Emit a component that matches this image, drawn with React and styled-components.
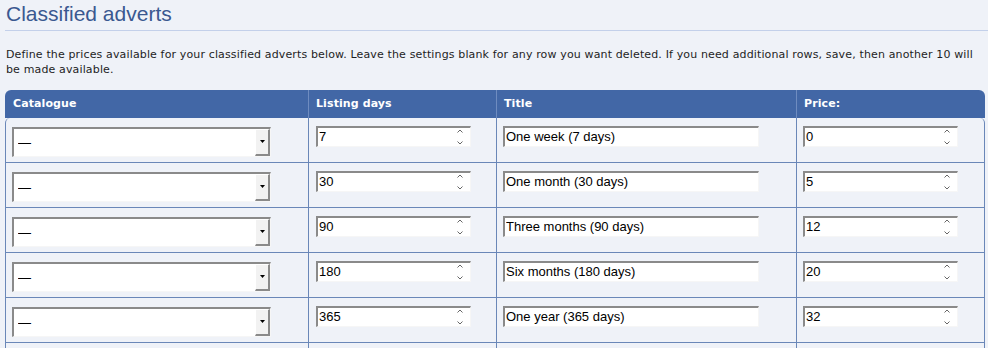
import React from 'react';
import styled, { createGlobalStyle } from 'styled-components';

const Global = createGlobalStyle`
  html, body { margin: 0; padding: 0; background: #eff2f8; overflow: hidden; }
  body { font-family: "DejaVu Sans", Verdana, sans-serif; font-size: 11px; color: #1e1e1e; }
`;

const Page = styled.div`
  padding: 0 0 0 5px;
`;

const Title = styled.h1`
  margin: 0;
  padding: 2px 0 4px 1px;
  font-family: "Liberation Sans", Arial, sans-serif;
  font-weight: normal;
  font-size: 21px;
  line-height: 24px;
  color: #3a5890;
  border-bottom: 1px solid #c3d0ea;
`;

const Intro = styled.p`
  margin: 16px 12px 0 1px;
  line-height: 15.4px;
  letter-spacing: 0.14px;
`;

const Table = styled.div`
  width: 980px;
  margin-top: 12px;
`;

const COLS = '303px 188px 300px 189px';

const HeadRow = styled.div`
  display: grid;
  grid-template-columns: ${COLS};
  height: 28px;
  background: #4267a6;
  border-radius: 6px 6px 0 0;
`;

const HeadCell = styled.div`
  display: flex;
  align-items: center;
  padding-left: ${p => (p.$first ? 8 : 7)}px;
  border-left: ${p => (p.$first ? 'none' : '1px solid #6f8cc0')};
  color: #fff;
  font-weight: bold;
  letter-spacing: 0.1px;
`;

const Body = styled.div`
  border-left: 1px solid #6a87b8;
  border-right: 1px solid #6a87b8;
  border-radius: 5px 5px 0 0;
`;

const Row = styled.div`
  display: grid;
  grid-template-columns: 302px 188px 300px 188px;
  height: 45px;
  box-sizing: border-box;
  border-bottom: 1px solid #6a87b8;
`;

const Cell = styled.div`
  box-sizing: border-box;
  padding: ${p => p.$top}px 0 0 ${p => p.$pl}px;
  border-left: ${p => (p.$first ? 'none' : '1px solid #6a87b8')};
`;

const SelectBox = styled.div`
  display: flex;
  width: 259px;
  height: 30px;
  box-sizing: border-box;
  background: #fff;
  border-top: 2px solid #8a8a8a;
  border-left: 2px solid #8a8a8a;
  border-right: 1px solid #f6f6f6;
  border-bottom: 1px solid #f6f6f6;
`;

const NativeSelect = styled.select`
  flex: 1;
  appearance: none;
  -webkit-appearance: none;
  border: none;
  outline: none;
  background: transparent;
  margin: 0;
  padding: 0 0 0 4px;
  font-family: "Liberation Sans", Arial, sans-serif;
  font-size: 13px;
  color: #000;
`;

const ArrowButton = styled.span`
  display: flex;
  align-items: center;
  justify-content: center;
  width: 15px;
  box-sizing: border-box;
  background: #f2f2f2;
  border-top: 1px solid #fff;
  border-left: 1px solid #fff;
  border-right: 2px solid #8a8a8a;
  border-bottom: 2px solid #8a8a8a;
`;

const Field = styled.div`
  display: flex;
  align-items: center;
  width: ${p => p.$w}px;
  height: 21px;
  box-sizing: border-box;
  background: #fff;
  border-top: 2px solid #8a8a8a;
  border-left: 2px solid #8a8a8a;
  border-right: 1px solid #f6f6f6;
  border-bottom: 1px solid #f6f6f6;
`;

const FieldInput = styled.input`
  flex: 1;
  min-width: 0;
  border: none;
  outline: none;
  background: transparent;
  margin: 0;
  padding: 0 0 0 1px;
  font-family: "Liberation Sans", Arial, sans-serif;
  font-size: 13px;
  color: #000;
`;

const Spinner = styled.svg`
  flex: none;
  margin-right: 6px;
`;

const SpinIcon = () => (
  <Spinner width="8" height="18" viewBox="0 0 8 18">
    <path d="M1.5 4.5 L4 2 L6.5 4.5" fill="none" stroke="#666" strokeWidth="1" />
    <path d="M1.5 13.5 L4 16 L6.5 13.5" fill="none" stroke="#666" strokeWidth="1" />
  </Spinner>
);

const Select = () => (
  <SelectBox>
    <NativeSelect defaultValue="">
      <option value="">—</option>
    </NativeSelect>
    <ArrowButton>
      <svg width="5" height="3" viewBox="0 0 5 3">
        <path d="M0 0 H5 L2.5 3 Z" fill="#000" />
      </svg>
    </ArrowButton>
  </SelectBox>
);

const NumberField = ({ value }) => (
  <Field $w={155}>
    <FieldInput defaultValue={value} />
    <SpinIcon />
  </Field>
);

const TextField = ({ value }) => (
  <Field $w={256}>
    <FieldInput defaultValue={value} />
  </Field>
);

const rows = [
  { days: '7', title: 'One week (7 days)', price: '0' },
  { days: '30', title: 'One month (30 days)', price: '5' },
  { days: '90', title: 'Three months (90 days)', price: '12' },
  { days: '180', title: 'Six months (180 days)', price: '20' },
  { days: '365', title: 'One year (365 days)', price: '32' },
  { days: '', title: '', price: '' },
  { days: '', title: '', price: '' },
];

export default function App() {
  return (
    <>
      <Global />
      <Page>
        <Title>Classified adverts</Title>
        <Intro>
          Define the prices available for your classified adverts below. Leave the settings blank for any row you want deleted. If you need additional rows, save, then another 10 will be made available.
        </Intro>
        <Table>
          <HeadRow>
            <HeadCell $first>Catalogue</HeadCell>
            <HeadCell>Listing days</HeadCell>
            <HeadCell>Title</HeadCell>
            <HeadCell>Price:</HeadCell>
          </HeadRow>
          <Body>
            {rows.map((r, i) => (
              <Row key={i}>
                <Cell $first $pl={6} $top={9}><Select /></Cell>
                <Cell $pl={7} $top={8}><NumberField value={r.days} /></Cell>
                <Cell $pl={6} $top={8}><TextField value={r.title} /></Cell>
                <Cell $pl={6} $top={8}><NumberField value={r.price} /></Cell>
              </Row>
            ))}
          </Body>
        </Table>
      </Page>
    </>
  );
}
